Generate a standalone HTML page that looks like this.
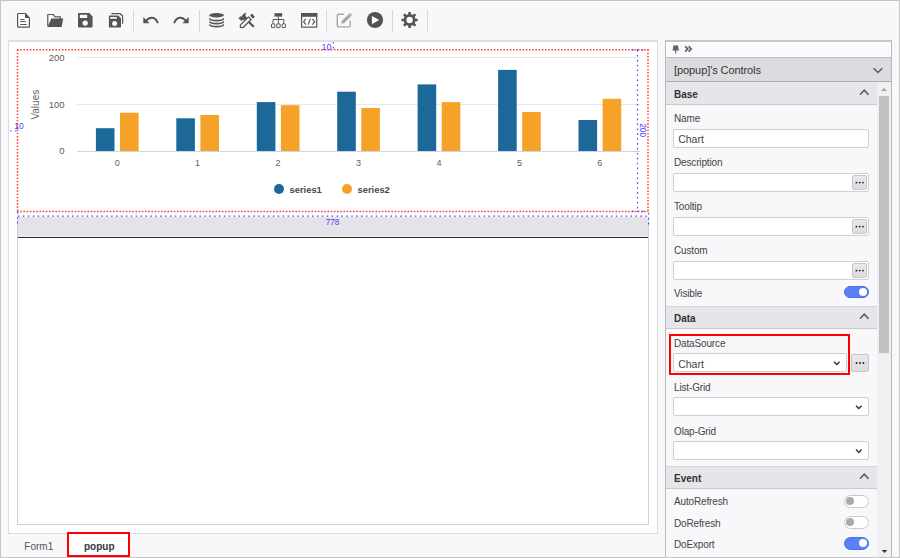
<!DOCTYPE html>
<html><head><meta charset="utf-8">
<style>
*{box-sizing:border-box;margin:0;padding:0}
html,body{width:900px;height:558px;overflow:hidden;background:#f8f8fa;font-family:"Liberation Sans",sans-serif;color:#444}
.a{position:absolute}
.frame{left:0;top:0;width:900px;height:558px;border:1px solid #c4c4c4}
.sep{position:absolute;top:10px;width:1px;height:22px;background:#d9d9dc}
.t{position:absolute;white-space:nowrap;line-height:1}
.lbl{position:absolute;left:674px;font-size:10px;line-height:1;color:#444;white-space:nowrap;letter-spacing:-0.15px}
.inp{position:absolute;left:673px;width:196px;height:19px;background:#fff;border:1px solid #cfcfd2;border-radius:2px}
.dots{position:absolute;width:15px;height:15px;background:linear-gradient(#e8e8ec,#dcdce0);border:1px solid #c6c6ca;border-radius:2px}
.dots i{position:absolute;top:5.8px;width:1.7px;height:1.7px;background:#222;border-radius:1px}
.hdr{position:absolute;left:666px;width:211px;height:23px;background:#e6e6ea;border-top:1px solid #d6d6da;border-bottom:1px solid #c9c9cd}
.hdr b{position:absolute;left:8px;top:7px;font-size:10px;line-height:1;color:#333}
.tog{position:absolute;left:843.5px;width:25.5px;height:12.6px;border-radius:7px}
.tog.on{background:#5c7ef8;border:1px solid #4f6fe0}
.tog.on i{position:absolute;right:1.2px;top:1.2px;width:8.2px;height:8.2px;border-radius:50%;background:#fff}
.tog.off{background:#fff;border:1px solid #c8c8cc}
.tog.off i{position:absolute;left:1.2px;top:1.2px;width:8.2px;height:8.2px;border-radius:50%;background:#a9a9ad}
</style></head>
<body>

<!-- toolbar -->
<svg class="a" style="left:0;top:0" width="450" height="40" viewBox="0 0 450 40">
<g fill="none" stroke="#545454" stroke-width="1.2" stroke-linejoin="round"><path d="M17.6,14.1 Q17.6,13.5 18.2,13.5 L25.2,13.5 L29.4,17.8 L29.4,26.6 Q29.4,27.2 28.8,27.2 L18.2,27.2 Q17.6,27.2 17.6,26.6 Z" fill="#fff"/></g>
<path d="M25,13.2 L29.8,18 L25,18 Z" fill="#545454"/>
<g stroke="#545454" stroke-width="1"><line x1="20.2" y1="19.6" x2="24.6" y2="19.6"/><line x1="20.2" y1="21.6" x2="25.8" y2="21.6"/><line x1="20.2" y1="24.5" x2="26.7" y2="24.5"/></g>
<path d="M47.8,26.3 L47.8,14.5 L53,14.5 L55,16.9 L60.3,16.9 L60.3,19" fill="#fff" stroke="#545454" stroke-width="1.2" stroke-linejoin="round"/>
<path d="M51.3,18.6 L63.2,18.6 L61.6,26.9 L47.6,26.9 Z" fill="#545454"/>
<path d="M78.8,13 L89.3,13 L92.6,16.4 L92.6,26.6 Q92.6,27.4 91.8,27.4 L78.8,27.4 Q78,27.4 78,26.6 L78,13.8 Q78,13 78.8,13 Z M79.8,14.7 L79.8,18.1 L87.2,18.1 L87.2,14.7 Z M85.2,20.4 A2.7,2.7 0 1 0 85.2,25.8 A2.7,2.7 0 1 0 85.2,20.4 Z" fill="#545454" fill-rule="evenodd"/>
<path d="M109.6,15.4 L118.2,15.4 L121,18.2 L121,26.7 Q121,27.4 120.3,27.4 L109.6,27.4 Q108.9,27.4 108.9,26.7 L108.9,16.1 Q108.9,15.4 109.6,15.4 Z M110.1,16.9 L110.1,18.8 L116.9,18.8 L116.9,16.9 Z M114.6,20.9 A2.5,2.5 0 1 0 114.6,25.9 A2.5,2.5 0 1 0 114.6,20.9 Z" fill="#545454" fill-rule="evenodd"/>
<path d="M111.4,13.7 L120.2,13.7 L122.6,16 L122.6,23.8" fill="none" stroke="#545454" stroke-width="1.2"/>
<path d="M143.3,16.9 L143.3,23.3 L149.6,23.3 Z" fill="#545454"/>
<path d="M146.2,20.6 C149.5,16.6 155,16.4 157.6,22.4" fill="none" stroke="#545454" stroke-width="1.9" stroke-linecap="round"/>
<g transform="translate(332,0) scale(-1,1)"><path d="M143.3,16.9 L143.3,23.3 L149.6,23.3 Z" fill="#545454"/><path d="M146.2,20.6 C149.5,16.6 155,16.4 157.6,22.4" fill="none" stroke="#545454" stroke-width="1.9" stroke-linecap="round"/></g>
<ellipse cx="216.6" cy="15.2" rx="7.4" ry="2.2" fill="#545454"/>
<path d="M209.2,17.6 A7.4,2.2 0 0 0 224,17.6 L224,19.3 A7.4,2.2 0 0 1 209.2,19.3 Z" fill="#545454"/>
<path d="M209.2,20.6 A7.4,2.2 0 0 0 224,20.6 L224,22.3 A7.4,2.2 0 0 1 209.2,22.3 Z" fill="#545454"/>
<path d="M209.2,23.6 A7.4,2.2 0 0 0 224,23.6 L224,25.3 A7.4,2.2 0 0 1 209.2,25.3 Z" fill="#545454"/>
<line x1="246" y1="19.2" x2="253.2" y2="26.2" stroke="#545454" stroke-width="2.2" stroke-linecap="round"/>
<path d="M238.8,18.3 L240.5,16.6 L241.3,17.2 L243,14.7 Q244.2,13.4 246,13.1 Q245,14.2 245.2,15.4 Q245.5,16.6 247,17.8 L244.4,20.4 L243.1,19.3 L241.5,20.8 Z" fill="#545454" stroke="#545454" stroke-width="0.6" stroke-linejoin="round"/>
<path d="M240.3,25.1 L248.5,16.9 L251.1,19.5 L242.9,27.7 L240.5,27.5 Z" fill="#f8f8fa" stroke="#545454" stroke-width="1.25" stroke-linejoin="round"/>
<rect x="-2.3" y="-1.4" width="4.6" height="2.8" rx="1.1" fill="#545454" transform="translate(252.5,16.1) rotate(45)"/>
<rect x="274.5" y="13.2" width="7.7" height="3.4" fill="#545454"/>
<g fill="none" stroke="#545454" stroke-width="1"><path d="M278.4,16.6 V19.5 M273,23.6 V19.5 H283.8 V23.6 M278.4,19.5 V23.6"/><rect x="271.5" y="23.9" width="3.3" height="3.7" rx="0.4"/><rect x="276.8" y="23.9" width="3.3" height="3.7" rx="0.4"/><rect x="282.1" y="23.9" width="3.3" height="3.7" rx="0.4"/></g>
<rect x="301.6" y="13.6" width="15.1" height="13.5" fill="#fff" stroke="#545454" stroke-width="1.2"/>
<rect x="301" y="13" width="16.2" height="3.8" fill="#545454"/>
<path d="M305.9,18.8 L303.6,21.7 L305.9,24.6 M312.4,18.8 L314.7,21.7 L312.4,24.6 M310.4,18.6 L308.2,24.6" fill="none" stroke="#545454" stroke-width="1.2"/>
<path d="M343.8,14.2 L338.4,14.2 Q337.3,14.2 337.3,15.3 L337.3,25.8 Q337.3,26.9 338.4,26.9 L349.1,26.9 Q350.2,26.9 350.2,25.8 L350.2,20.4" fill="none" stroke="#a6a6a6" stroke-width="1.4"/>
<path d="M341.3,23.4 L341.8,21 L348.6,14.2 L350.8,16.4 L344,23.2 Z" fill="#a6a6a6"/>
<path d="M349.2,13.6 Q350,12.9 350.8,13.6 L351.4,14.2 Q352.1,15 351.4,15.8 L351,16.2 L348.8,14 Z" fill="#a6a6a6"/>
<circle cx="375" cy="20" r="8.1" fill="#545454"/><path d="M371.9,16.1 L371.9,24.2 L379.2,20.1 Z" fill="#fff"/>
<g fill="#545454"><rect x="408.30" y="11.90" width="2.6" height="4" rx="0.5" transform="rotate(0 409.6 20)"/><rect x="408.30" y="11.90" width="2.6" height="4" rx="0.5" transform="rotate(45 409.6 20)"/><rect x="408.30" y="11.90" width="2.6" height="4" rx="0.5" transform="rotate(90 409.6 20)"/><rect x="408.30" y="11.90" width="2.6" height="4" rx="0.5" transform="rotate(135 409.6 20)"/><rect x="408.30" y="11.90" width="2.6" height="4" rx="0.5" transform="rotate(180 409.6 20)"/><rect x="408.30" y="11.90" width="2.6" height="4" rx="0.5" transform="rotate(225 409.6 20)"/><rect x="408.30" y="11.90" width="2.6" height="4" rx="0.5" transform="rotate(270 409.6 20)"/><rect x="408.30" y="11.90" width="2.6" height="4" rx="0.5" transform="rotate(315 409.6 20)"/></g>
<circle cx="409.6" cy="20" r="4.6" fill="none" stroke="#545454" stroke-width="2.8"/>
</svg>
<!-- toolbar separators -->
<div class="sep" style="left:133px"></div>
<div class="sep" style="left:199px"></div>
<div class="sep" style="left:326px"></div>
<div class="sep" style="left:392px"></div>
<div class="sep" style="left:427px"></div>

<!-- main panel -->
<div class="a" style="left:8px;top:40px;width:650px;height:494px;background:#fff;border:1px solid #dcdcde;border-top:2px solid #e0e0e2"></div>
<!-- inner design area -->
<div class="a" style="left:17px;top:217px;width:632px;height:308px;border:1px solid #c9d3de;border-top:none;background:#fff"></div>
<div class="a" style="left:18px;top:217px;width:630px;height:20px;background:#e4e4e8"></div>
<div class="a" style="left:18px;top:235px;width:630px;height:2px;background:#ebebef"></div>
<div class="a" style="left:18px;top:237px;width:630px;height:1px;background:#333"></div>

<!-- chart -->
<svg class="a" style="left:0;top:0" width="900" height="558" viewBox="0 0 900 558">
<line x1="77" y1="57.5" x2="640" y2="57.5" stroke="#e8e8e8" stroke-width="1"/>
<line x1="77" y1="104.5" x2="640" y2="104.5" stroke="#e8e8e8" stroke-width="1"/>
<rect x="95.9" y="128.2" width="18.6" height="23.1" fill="#1c6898"/>
<rect x="120.0" y="112.7" width="18.6" height="38.6" fill="#f6a228"/>
<rect x="176.3" y="118.3" width="18.6" height="33.0" fill="#1c6898"/>
<rect x="200.4" y="115" width="18.6" height="36.3" fill="#f6a228"/>
<rect x="256.8" y="102.1" width="18.6" height="49.2" fill="#1c6898"/>
<rect x="280.9" y="105.2" width="18.6" height="46.1" fill="#f6a228"/>
<rect x="337.2" y="91.7" width="18.6" height="59.6" fill="#1c6898"/>
<rect x="361.3" y="108" width="18.6" height="43.3" fill="#f6a228"/>
<rect x="417.6" y="84.4" width="18.6" height="66.9" fill="#1c6898"/>
<rect x="441.7" y="102.1" width="18.6" height="49.2" fill="#f6a228"/>
<rect x="498.1" y="69.9" width="18.6" height="81.4" fill="#1c6898"/>
<rect x="522.2" y="112" width="18.6" height="39.3" fill="#f6a228"/>
<rect x="578.5" y="120" width="18.6" height="31.3" fill="#1c6898"/>
<rect x="602.6" y="98.8" width="18.6" height="52.5" fill="#f6a228"/>
<line x1="77" y1="151.5" x2="640" y2="151.5" stroke="#ccd6eb" stroke-width="1"/>
<text x="64.5" y="60.8" text-anchor="end" font-size="9.5" fill="#5c5c5c">200</text>
<text x="64.5" y="108" text-anchor="end" font-size="9.5" fill="#5c5c5c">100</text>
<text x="64.5" y="154" text-anchor="end" font-size="9.5" fill="#5c5c5c">0</text>
<text x="117.2" y="166" text-anchor="middle" font-size="9" fill="#606060">0</text>
<text x="197.6" y="166" text-anchor="middle" font-size="9" fill="#606060">1</text>
<text x="278.1" y="166" text-anchor="middle" font-size="9" fill="#606060">2</text>
<text x="358.5" y="166" text-anchor="middle" font-size="9" fill="#606060">3</text>
<text x="438.9" y="166" text-anchor="middle" font-size="9" fill="#606060">4</text>
<text x="519.4" y="166" text-anchor="middle" font-size="9" fill="#606060">5</text>
<text x="599.8" y="166" text-anchor="middle" font-size="9" fill="#606060">6</text>
<text transform="translate(38.5,104.7) rotate(-90)" text-anchor="middle" font-size="10" fill="#666">Values</text>
<circle cx="279" cy="189" r="5" fill="#1c6898"/><circle cx="347" cy="189" r="5" fill="#f6a228"/>
<text x="289.5" y="193.3" font-size="9.4" font-weight="bold" fill="#484848" letter-spacing="0">series1</text>
<text x="357.5" y="193.3" font-size="9.4" font-weight="bold" fill="#484848" letter-spacing="0">series2</text>
<g stroke="#ff3a3a" stroke-width="1.4" stroke-dasharray="1.6 1.6" fill="none">
<line x1="17" y1="49.8" x2="648.5" y2="49.8"/><line x1="17" y1="211.5" x2="648.5" y2="211.5"/>
<line x1="17.5" y1="49.5" x2="17.5" y2="211.5"/><line x1="648" y1="49.5" x2="648" y2="211.5"/>
</g>
<g stroke="#4a4aff" stroke-width="1.2" stroke-dasharray="1.6 3.3" fill="none">
<line x1="18" y1="216.2" x2="649" y2="216.2"/>
<line x1="648.6" y1="213" x2="648.6" y2="226"/>
<line x1="637.5" y1="50" x2="637.5" y2="211"/>
<line x1="333.3" y1="42" x2="333.3" y2="50"/>
<line x1="10" y1="131" x2="17" y2="131"/>
<line x1="17.5" y1="212" x2="17.5" y2="226"/>
<line x1="632" y1="49.8" x2="646" y2="49.8"/><line x1="632" y1="211.3" x2="646" y2="211.3"/>
</g>
<text x="321.6" y="49.6" font-size="9" fill="#4848ff">10</text>
<text x="14.2" y="128.9" font-size="8.5" fill="#4848ff">10</text>
<text x="332.6" y="224.8" text-anchor="middle" font-size="8.2" fill="#4040ff">778</text>
<text transform="translate(640.2,130.2) rotate(90)" text-anchor="middle" font-size="8.4" fill="#4040ff">200</text>
</svg>
<!-- tabs -->
<div class="t" style="left:24.3px;top:541.8px;font-size:10px;color:#555">Form1</div>
<div class="a" style="left:67px;top:532px;width:63px;height:25px;border:2px solid #f00;background:#fff"></div>
<div class="t" style="left:84px;top:541.6px;font-size:10px;font-weight:bold;color:#383838">popup</div>

<!-- right panel -->
<div class="a" style="left:665px;top:40px;width:227px;height:518px;border:1px solid #b8b8bb;border-top:2px solid #c6c6c9;border-bottom:none;background:#f8f8fa"></div>
<div class="a" style="left:666px;top:42px;width:225px;height:16px;background:#fff;border-bottom:1px solid #bcbcc0"></div>
<div class="a" style="left:667px;top:43px;width:223px;height:13px;background:#f9f9fb"></div>
<div class="a" style="left:666px;top:58px;width:225px;height:24px;background:#dcdce0;border-bottom:1px solid #acacb0"></div>
<div class="t" style="left:674px;top:65px;font-size:11px;color:#333;letter-spacing:-0.08px">[popup]'s Controls</div>

<!-- scrollbar -->
<div class="a" style="left:877px;top:82px;width:14px;height:475px;background:#f0f0f2"></div>
<div class="a" style="left:879px;top:96px;width:10px;height:257px;background:#c1c1c1"></div>

<!-- Base -->
<div class="hdr" style="top:82px;border-top-color:#ececf0"><b>Base</b></div>
<div class="lbl" style="top:114px">Name</div>
<div class="inp" style="top:129px"></div>
<div class="t" style="left:678.2px;top:134px;font-size:10.5px;color:#444">Chart</div>
<div class="lbl" style="top:158px">Description</div>
<div class="inp" style="top:173px"></div>
<div class="dots" style="left:852px;top:175px"><svg width="13" height="13" style="position:absolute;left:0;top:0"><circle cx="3.4" cy="6.6" r="0.95" fill="#222"/><circle cx="6.7" cy="6.6" r="0.95" fill="#222"/><circle cx="10" cy="6.6" r="0.95" fill="#222"/></svg></div>
<div class="lbl" style="top:202px">Tooltip</div>
<div class="inp" style="top:217px"></div>
<div class="dots" style="left:852px;top:219px"><svg width="13" height="13" style="position:absolute;left:0;top:0"><circle cx="3.4" cy="6.6" r="0.95" fill="#222"/><circle cx="6.7" cy="6.6" r="0.95" fill="#222"/><circle cx="10" cy="6.6" r="0.95" fill="#222"/></svg></div>
<div class="lbl" style="top:246px">Custom</div>
<div class="inp" style="top:261px"></div>
<div class="dots" style="left:852px;top:263px"><svg width="13" height="13" style="position:absolute;left:0;top:0"><circle cx="3.4" cy="6.6" r="0.95" fill="#222"/><circle cx="6.7" cy="6.6" r="0.95" fill="#222"/><circle cx="10" cy="6.6" r="0.95" fill="#222"/></svg></div>
<div class="lbl" style="top:289px">Visible</div>
<div class="tog on" style="top:285.6px"><i></i></div>

<!-- Data -->
<div class="hdr" style="top:306px"><b>Data</b></div>
<div class="lbl" style="top:339px">DataSource</div>
<div class="inp" style="top:353px;width:174px"></div>
<div class="t" style="left:678.2px;top:359px;font-size:10.5px;color:#444">Chart</div>
<div class="a" style="left:669px;top:334px;width:181px;height:41px;border:2px solid #f00"></div>
<div class="dots" style="left:851px;top:354px;width:18px;height:18px"><svg width="16" height="16" style="position:absolute;left:0;top:0"><circle cx="4.6" cy="8" r="0.95" fill="#222"/><circle cx="8" cy="8" r="0.95" fill="#222"/><circle cx="11.4" cy="8" r="0.95" fill="#222"/></svg></div>
<div class="lbl" style="top:382.5px">List-Grid</div>
<div class="inp" style="top:397px"></div>
<div class="lbl" style="top:426.5px">Olap-Grid</div>
<div class="inp" style="top:441px"></div>

<!-- Event -->
<div class="hdr" style="top:466px"><b>Event</b></div>
<div class="lbl" style="top:497px">AutoRefresh</div>
<div class="tog off" style="top:495px"><i></i></div>
<div class="lbl" style="top:519px">DoRefresh</div>
<div class="tog off" style="top:516px"><i></i></div>
<div class="lbl" style="top:540px">DoExport</div>
<div class="tog on" style="top:537px"><i></i></div>

<!-- panel icons -->
<svg class="a" style="left:0;top:0" width="900" height="558" viewBox="0 0 900 558">
<path d="M673.2,45.6 L678.2,45.6 L678.2,48.2 L679.2,50.6 L672.2,50.6 L673.2,48.2 Z" fill="#606060"/><line x1="675.7" y1="50" x2="675.7" y2="53.4" stroke="#606060" stroke-width="1.1"/>
<path d="M685.2,46.4 L687.8,49 L685.2,51.6 M688.6,46.4 L691.2,49 L688.6,51.6" fill="none" stroke="#5a5a5a" stroke-width="1.6"/>
<path d="M873.6,68.2 L877.9,72.5 L882.4,68.2" fill="none" stroke="#5c5c5c" stroke-width="1.5"/>
<path d="M860,94.8 L864.3,90.2 L868.6,94.8" fill="none" stroke="#5c5c5c" stroke-width="1.5"/>
<path d="M860,318.8 L864.3,314.2 L868.6,318.8" fill="none" stroke="#5c5c5c" stroke-width="1.5"/>
<path d="M860,478.8 L864.3,474.2 L868.6,478.8" fill="none" stroke="#5c5c5c" stroke-width="1.5"/>
<path d="M881.2,90.9 L887,90.9 L884.1,87.8 Z" fill="#a3a3a3"/>
<path d="M881.6,549.9 L887.4,549.9 L884.5,553 Z" fill="#333"/>
<path d="M834,361.8 L836.8,364.6 L839.6,361.8" fill="none" stroke="#333" stroke-width="1.4"/>
<path d="M856,405.8 L858.8,408.6 L861.6,405.8" fill="none" stroke="#333" stroke-width="1.4"/>
<path d="M856,449.6 L858.8,452.40000000000003 L861.6,449.6" fill="none" stroke="#333" stroke-width="1.4"/>
</svg>
<div class="a frame"></div>
</body></html>
